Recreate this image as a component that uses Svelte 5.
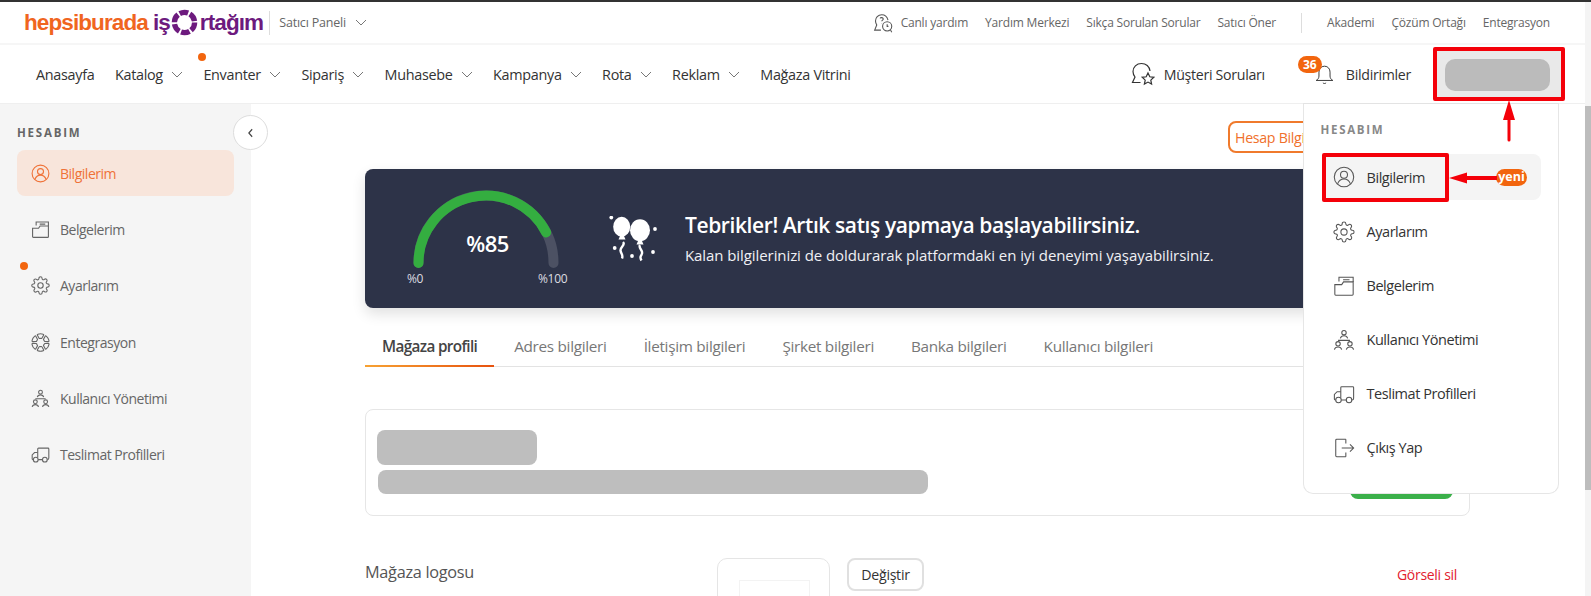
<script>
  const topLinks = ['Yardım Merkezi', 'Sıkça Sorulan Sorular', 'Satıcı Öner'];
  const topLinks2 = ['Akademi', 'Çözüm Ortağı', 'Entegrasyon'];
  const nav = [
    { t: 'Anasayfa' }, { t: 'Katalog', c: 1 }, { t: 'Envanter', c: 1, dot: 1 }, { t: 'Sipariş', c: 1 },
    { t: 'Muhasebe', c: 1 }, { t: 'Kampanya', c: 1 }, { t: 'Rota', c: 1 }, { t: 'Reklam', c: 1 }, { t: 'Mağaza Vitrini' }
  ];
  const side = [
    { t: 'Belgelerim', i: 'docs' }, { t: 'Ayarlarım', i: 'gear', dot: 1 }, { t: 'Entegrasyon', i: 'integ' },
    { t: 'Kullanıcı Yönetimi', i: 'users' }, { t: 'Teslimat Profilleri', i: 'truck' }
  ];
  const menu = [
    { t: 'Ayarlarım', i: 'gear' }, { t: 'Belgelerim', i: 'docs' }, { t: 'Kullanıcı Yönetimi', i: 'users' },
    { t: 'Teslimat Profilleri', i: 'truck' }, { t: 'Çıkış Yap', i: 'exit' }
  ];
  const tabs = ['Adres bilgileri', 'İletişim bilgileri', 'Şirket bilgileri', 'Banka bilgileri', 'Kullanıcı bilgileri'];
  const petals = [0, 60, 120, 180, 240, 300];
</script>

{#snippet chev()}
  <svg class="chev" viewBox="0 0 12 7"><path d="M1 1l5 5 5-5" /></svg>
{/snippet}

{#snippet icon(name)}
  <svg class="ico" viewBox="0 0 24 24">
    {#if name === 'user'}
      <circle cx="12" cy="12" r="10.6" /><circle cx="12" cy="9.6" r="3.8" /><path d="M5 19.5c1.2-3.5 3.8-5.4 7-5.4s5.8 1.9 7 5.4" />
    {:else if name === 'docs'}
      <path d="M2 10.500h7.500l2-3H22V21a1 1 0 0 1-1 1H3a1 1 0 0 1-1-1z" /><path d="M6.500 7V2.500H22V7.500M11 5.200h7" />
    {:else if name === 'gear'}
      <circle cx="12" cy="12" r="3.4" /><path d="M19.4 15a1.65 1.65 0 0 0 .33 1.82l.06.06a2 2 0 0 1 0 2.83 2 2 0 0 1-2.83 0l-.06-.06a1.65 1.65 0 0 0-1.82-.33 1.65 1.65 0 0 0-1 1.51V21a2 2 0 0 1-2 2 2 2 0 0 1-2-2v-.09A1.65 1.65 0 0 0 9 19.4a1.65 1.65 0 0 0-1.82.33l-.06.06a2 2 0 0 1-2.83 0 2 2 0 0 1 0-2.83l.06-.06a1.65 1.65 0 0 0 .33-1.82 1.65 1.65 0 0 0-1.51-1H3a2 2 0 0 1-2-2 2 2 0 0 1 2-2h.09A1.65 1.65 0 0 0 4.6 9a1.65 1.65 0 0 0-.33-1.82l-.06-.06a2 2 0 0 1 0-2.83 2 2 0 0 1 2.83 0l.06.06a1.65 1.65 0 0 0 1.82.33H9a1.65 1.65 0 0 0 1-1.51V3a2 2 0 0 1 2-2 2 2 0 0 1 2 2v.09a1.65 1.65 0 0 0 1 1.51 1.65 1.65 0 0 0 1.82-.33l.06-.06a2 2 0 0 1 2.83 0 2 2 0 0 1 0 2.83l-.06.06a1.65 1.65 0 0 0-.33 1.82V9a1.65 1.65 0 0 0 1.51 1H21a2 2 0 0 1 2 2 2 2 0 0 1-2 2h-.09a1.65 1.65 0 0 0-1.51 1z" />
    {:else if name === 'integ'}
      {#each petals as a}
        <path transform="rotate({a} 12 12)" d="M8.600 1.600c2.200-.8 4.600-.8 6.800 0 .6.2.8.8.5 1.300l-2.200 3.600c-.2.4-.6.5-1 .4-.5-.1-1-.1-1.500 0-.4.1-.8 0-1-.4L8.100 2.900c-.3-.5-.1-1.100.5-1.300z" />
      {/each}
    {:else if name === 'users'}
      <circle cx="12" cy="4" r="2.400" /><path d="M8 10.200c.5-2 2-2.800 4-2.800s3.500.8 4 2.800M5.500 12.400h13" />
      <circle cx="5.500" cy="16.200" r="2.400" /><path d="M1.500 22.500c.5-2 2-2.800 4-2.800s3.500.8 4 2.800" />
      <circle cx="18.500" cy="16.200" r="2.400" /><path d="M14.500 22.500c.5-2 2-2.800 4-2.800s3.500.8 4 2.800" />
    {:else if name === 'truck'}
      <path d="M8.500 16V5a1 1 0 0 1 1-1h12a1 1 0 0 1 1 1v11.500c0 1-.5 2-1.800 2" />
      <path d="M3 18.500H2.500a1 1 0 0 1-1-1v-5l3-3h4M9 18.500h5.500" />
      <circle cx="6" cy="18.500" r="3" /><circle cx="17.500" cy="18.500" r="3" />
    {:else if name === 'exit'}
      <path d="M14 2.500H4a1 1 0 0 0-1 1v17a1 1 0 0 0 1 1h10M9.500 12h13M18.500 8l4 4-4 4M14 21.500V17M14 2.500V7" />
    {/if}
  </svg>
{/snippet}

<div class="page">
  <div class="viewport">
    <header class="topbar">
      <div class="logo">
        <span class="hb">hepsiburada</span>
        <span class="io">iş<svg class="ring" viewBox="0 0 28 28"><circle cx="14" cy="14" r="10.5" /></svg>rtağım</span>
      </div>
      <div class="panel">Satıcı Paneli {@render chev()}</div>
      <div class="toplinks">
        <span class="live">
          <svg class="liveico" viewBox="0 0 24 24">
            <path d="M18 8.500C17 4.500 14 2 10.500 2 6 2 3 5.500 3 9.500c0 2 .8 3.500 1.500 4.800L2 20.500h7.500" />
            <path d="M8.500 6.500c.5-1.300 3.500-1.300 3.800.5.2 1.500-1.800 1.500-1.800 3M10.500 12.500v.5" />
            <circle cx="17" cy="16" r="5.500" /><path d="M21 20.500l1.500 2.500M17 13.500V16h1.500" />
          </svg>
          Canlı yardım
        </span>
        {#each topLinks as l}<span>{l}</span>{/each}
        <i class="vline"></i>
        {#each topLinks2 as l}<span>{l}</span>{/each}
      </div>
    </header>

    <nav class="navbar">
      <ul class="navlist">
        {#each nav as n}
          <li class:hasdot={n.dot}>{n.t}{#if n.c}{@render chev()}{/if}</li>
        {/each}
      </ul>
      <div class="navright">
        <span class="nr q">
          <svg class="qico" viewBox="0 0 24 24">
            <path d="M19 9C18.500 4.500 15 1.500 10.500 1.500 5.500 1.500 2 5 2 9.500c0 2.200.8 4 2 5.500L1.500 20.500h8" />
            <path d="M17 11l1.800 3.800 4 .5-3 2.800.8 4-3.600-2-3.600 2 .8-4-3-2.800 4-.5z" />
          </svg>
          Müşteri Soruları
        </span>
        <span class="nr bell">
          <em class="badge">36</em>
          <svg class="bellico" viewBox="0 0 24 24"><path d="M12 1.500c-4.500 0-7 3.500-7 7.500v5c0 2.500-1.500 4.500-3.500 5.500h21c-2-1-3.500-3-3.500-5.500V9c0-4-2.500-7.500-7-7.500zM10 22.500c1 1.200 3 1.200 4 0" /></svg>
          Bildirimler
        </span>
      </div>
    </nav>

    <div class="body">
      <aside class="sidebar">
        <h4>HESABIM</h4>
        <div class="sideactive">{@render icon('user')}Bilgilerim</div>
        {#each side as s}
          <div class="siderow" class:hasdot={s.dot}>{@render icon(s.i)}{s.t}</div>
        {/each}
      </aside>

      <main class="main">
        <div class="actions"><button class="hesap">Hesap Bilgilerim</button></div>
        <section class="banner">
          <div class="gauge">
            <svg viewBox="0 0 170 100" class="gaugesvg">
              <path class="track" d="M14.500 77A67.500 67.500 0 0 1 149.500 77" />
              <path class="fill" d="M14.500 77A67.500 67.500 0 0 1 142.100 46.400" />
            </svg>
            <b>%85</b>
            <span class="g0">%0</span>
            <span class="g100">%100</span>
          </div>
          <svg class="balloons" viewBox="0 0 50 48">
            <g fill="#fff">
              <ellipse cx="12.700" cy="10.700" rx="8.500" ry="10" /><ellipse cx="31" cy="14.300" rx="10" ry="11" />
              <path d="M11 20h4l1.500 3.500h-7zM29 25h4l1.500 3.500h-7z" />
              <circle cx="2.300" cy="1.600" r="1.900" /><circle cx="46" cy="13" r="1.900" /><circle cx="5.700" cy="32" r="1.900" />
              <circle cx="23" cy="40" r="1.900" /><circle cx="44" cy="36" r="1.900" />
            </g>
            <path class="str" d="M14 26c3 3-3 5-2.500 8.500s3 5 1.500 8M31 29c-2 3 3 5 2 8.500s-3 3-.5 7" />
          </svg>
          <div class="bantext">
            <h2>Tebrikler! Artık satış yapmaya başlayabilirsiniz.</h2>
            <p>Kalan bilgilerinizi de doldurarak platformdaki en iyi deneyimi yaşayabilirsiniz.</p>
          </div>
        </section>

        <div class="tabs">
          <span class="tab active">Mağaza profili</span>
          {#each tabs as t}<span class="tab">{t}</span>{/each}
        </div>

        <section class="card">
          <div class="cardtext">
            <div class="blk b1"></div>
            <div class="blk b2"></div>
          </div>
          <div class="greenbtn"></div>
        </section>

        <section class="logorow">
          <div class="logoinfo">
            <h3>Mağaza logosu</h3>
            <p>Satıcı profilinde kullanılacak mağaza görseli ürünlerde</p>
          </div>
          <div class="logobox"><i></i></div>
          <button class="change">Değiştir</button>
          <span class="del">Görseli sil</span>
        </section>

        <button class="collapse" aria-label="Daralt"><svg viewBox="0 0 8 12"><path d="M6 1.500L2 6l4 4.500" /></svg></button>
      </main>
    </div>

    <div class="userbtn"><div class="userpill"></div></div>

    <div class="dropdown">
      <h4>HESABIM</h4>
      <div class="mrow sel">{@render icon('user')}Bilgilerim<em class="yeni">yeni</em></div>
      {#each menu as m}
        <div class="mrow">{@render icon(m.i)}{m.t}</div>
      {/each}
    </div>

    <i class="redbox rb1"></i>
    <i class="redbox rb2"></i>
    <svg class="arrow a1" viewBox="0 0 14 42"><path d="M7 0L13 20H8.500V40a1.500 1.500 0 0 1-3 0V20H1z" /></svg>
    <svg class="arrow a2" viewBox="0 0 48 12"><path d="M0 6L18 .5V4H48V8H18V11.500z" /></svg>
  </div>
  <div class="scrollbar"><div class="thumb"></div></div>
</div>

<style>
  :global(body) { margin: 0; background: #fff; }
  .page { display: flex; width: 1591px; height: 596px; overflow: hidden; border-top: 2px solid #333; box-sizing: border-box; font-family: "Open Sans", "Noto Sans", sans-serif; color: #333; }
  .viewport { position: relative; flex: 1; min-width: 0; }
  .scrollbar { width: 6px; background: #f4f4f4; padding-top: 104px; padding-bottom: 106px; box-sizing: border-box; display: flex; }
  .thumb { flex: 1; background: #bdbdbd; }

  .topbar { height: 41px; border-bottom: 2px solid #f6f6f6; display: flex; align-items: center; padding-left: 24px; }
  .logo { display: flex; align-items: center; font-family: "Liberation Sans", sans-serif; font-weight: 700; font-size: 22.5px; letter-spacing: -.9px; gap: 5px; border-right: 1px solid #ddd; padding-right: 6px; height: 24px; line-height: 24px; }
  .hb { color: #f0651f; }
  .io { color: #6d1a7e; display: flex; align-items: center; }
  .ring { width: 27px; height: 27px; margin: 0 1.5px; fill: none; stroke: #6d1a7e; stroke-width: 5.5; stroke-dasharray: 9 2; }
  .panel { margin-left: 9px; font-size: 12.5px; color: #666; display: flex; align-items: center; letter-spacing: -.2px; }
  .panel .chev { margin-left: 9px; }
  .toplinks { margin-left: auto; margin-right: 35px; display: flex; align-items: center; gap: 17px; font-size: 12px; color: #666; letter-spacing: -.2px; }
  .live { display: flex; align-items: center; gap: 8px; }
  .liveico { width: 20px; height: 20px; fill: none; stroke: #555; stroke-width: 1.300; }
  .vline { width: 1px; height: 20px; background: #ddd; margin: 0 8px; }

  .chev { width: 12px; height: 7px; fill: none; stroke: #777; stroke-width: 1; margin-left: 8px; flex: none; }

  .navbar { height: 59px; border-bottom: 1px solid #efefef; display: flex; align-items: center; padding-left: 36px; box-sizing: border-box; }
  .navlist { list-style: none; margin: 0; padding: 0; display: flex; gap: 20.5px; font-size: 14.4px; letter-spacing: -.3px; color: #333; }
  .navlist li { display: flex; align-items: center; position: relative; }
  .navlist li.hasdot::before { content: ""; position: absolute; left: -5px; top: -12px; width: 8px; height: 8px; border-radius: 50%; background: #f2650e; }
  .navright { margin-left: auto; margin-right: 174px; display: flex; align-items: center; gap: 32px; font-size: 14.2px; letter-spacing: -.3px; }
  .nr { display: flex; align-items: center; position: relative; }
  .qico { width: 24px; height: 24px; fill: none; stroke: #333; stroke-width: 1.200; margin-right: 9px; }
  .bellico { width: 19px; height: 19px; fill: none; stroke: #333; stroke-width: 1.200; margin-right: 12px; margin-left: 18px; }
  .badge { position: absolute; left: 1px; top: -9px; width: 24px; height: 17px; border-radius: 9px; background: #f2650e; color: #fff; font-style: normal; font-size: 12px; font-weight: 700; text-align: center; line-height: 17px; letter-spacing: 0; }

  .body { display: grid; grid-template-columns: 251px 1fr; height: 493px; }
  .sidebar { background: #f5f5f5; padding: 21px 17px 0; box-sizing: border-box; }
  .sidebar h4 { margin: 0 0 9px; font-size: 11.500px; line-height: 16px; font-weight: 700; letter-spacing: 1.800px; color: #666; }
  .sideactive, .siderow { height: 46px; display: flex; align-items: center; padding-left: 13.5px; font-size: 14px; letter-spacing: -.48px; position: relative; }
  .sideactive { width: 217px; box-sizing: border-box; background: #f8e5db; border-radius: 8px; color: #ef7238; margin-bottom: 10.500px; }
  .siderow { color: #666; margin-bottom: 10.300px; }
  .siderow.hasdot::before { content: ""; position: absolute; left: 3px; top: -1px; width: 8px; height: 8px; border-radius: 50%; background: #f2650e; }
  .ico { width: 19px; height: 19px; fill: none; stroke: currentColor; stroke-width: 1.400; margin-right: 10.5px; flex: none; }

  .main { position: relative; padding: 17px 115px 0 114px; min-width: 0; }
  .actions { display: flex; height: 32px; margin-bottom: 16px; }
  .hesap { margin-left: 863px; width: 150px; height: 32px; box-sizing: border-box; background: #fff; border: 2px solid #f07a2c; border-radius: 8px; color: #f0702b; font: inherit; font-size: 14.2px; letter-spacing: -.3px; text-align: left; padding: 0 0 0 5px; white-space: nowrap; }
  .banner { height: 139px; background: #2d3348; border-radius: 8px; box-shadow: 0 6px 14px rgba(0,0,0,.12); display: flex; color: #fff; box-sizing: border-box; padding-left: 39px; align-items: flex-start; margin-bottom: 19px; }
  .gauge { position: relative; width: 170px; height: 139px; flex: none; margin-right: 35px; }
  .gaugesvg { position: absolute; left: 0; top: 17px; width: 170px; height: 100px; fill: none; stroke-linecap: round; stroke-width: 10; }
  .track { stroke: #4c5163; }
  .fill { stroke: #34ae40; }
  .gauge b { position: absolute; left: 0; right: 0; top: 60px; text-align: center; font-size: 22px; line-height: 28px; font-weight: 600; letter-spacing: -.5px; margin-left: -3px; }
  .g0, .g100 { position: absolute; top: 102px; font-size: 12px; line-height: 16px; color: #dcdce0; letter-spacing: -.3px; }
  .g0 { left: 3px; }
  .g100 { left: 134px; }
  .balloons { width: 50px; height: 48px; margin-top: 47px; flex: none; }
  .str { fill: none; stroke: #fff; stroke-width: 2.400; }
  .bantext { margin-left: 26px; margin-top: 41px; }
  .bantext h2 { margin: 0; font-size: 21px; line-height: 31px; font-weight: 600; letter-spacing: -.4px; white-space: nowrap; }
  .bantext p { margin: 3px 0 0; font-size: 15px; line-height: 22px; letter-spacing: -.08px; white-space: nowrap; color: #f0f0f4; }

  .tabs { display: flex; height: 39px; border-bottom: 1px solid #e3e3e3; gap: 37px; font-size: 15.300px; letter-spacing: -.3px; color: #777; box-sizing: content-box; padding-left: 17px; margin-bottom: 42px; }
  .tab { line-height: 38px; position: relative; white-space: nowrap; }
  .tab.active { color: #444; font-weight: 600; letter-spacing: -.65px; }
  .tab.active::after { content: ""; position: absolute; left: -17px; right: -17px; bottom: -1px; height: 2px; background: linear-gradient(90deg, #f7a233, #e7520e); }

  .card { height: 107px; box-sizing: border-box; border: 1px solid #e6e6e6; border-radius: 8px; position: relative; padding: 20px 11px 0; }
  .blk { background: #bebebe; border-radius: 6px; }
  .b1 { width: 160px; height: 35px; border-radius: 8px; }
  .b2 { width: 550px; height: 24px; margin-top: 5px; margin-left: 1px; border-radius: 8px; }
  .greenbtn { position: absolute; left: 984px; top: 60px; width: 103px; height: 29px; background: #3bb04a; border-radius: 8px; }

  .logorow { display: flex; align-items: flex-start; margin-top: 42px; position: relative; }
  .logoinfo { width: 352px; flex: none; padding-top: 3px; }
  .logoinfo h3 { margin: 0; font-size: 16.300px; line-height: 22px; font-weight: 400; color: #555; letter-spacing: -.3px; }
  .logoinfo p { margin: 10px 0 0; font-size: 12.500px; line-height: 18px; color: #888; white-space: nowrap; }
  .logobox { width: 113px; height: 90px; box-sizing: border-box; border: 1px solid #e5e5e5; border-radius: 10px; flex: none; padding: 21px 21px 0; }
  .logobox i { display: block; width: 69px; height: 50px; border: 1px solid #f3f3f3; }
  .change { margin-left: 17px; width: 77px; height: 33px; background: #fff; border: 2px solid #e0e0e0; border-radius: 8px; font: inherit; font-size: 14.2px; letter-spacing: -.3px; color: #333; padding: 0; }
  .del { margin-left: auto; margin-right: 13px; margin-top: 7px; color: #e2202e; font-size: 14px; letter-spacing: -.3px; line-height: 20px; }

  .collapse { position: absolute; left: -18px; top: 11px; width: 35px; height: 35px; border-radius: 50%; background: #fff; border: 1px solid #ddd; padding: 0; display: flex; align-items: center; justify-content: center; }
  .collapse svg { width: 7px; height: 10px; fill: none; stroke: #444; stroke-width: 1.400; }

  .userbtn { position: absolute; left: 1433px; top: 45px; width: 130px; height: 53px; box-sizing: border-box; background: #e9e9e9; padding: 12px; border-radius: 8px; }
  .userpill { background: #bbb; height: 32px; width: 105px; border-radius: 10px; }

  .dropdown { position: absolute; left: 1303px; top: 101px; width: 256px; height: 391px; box-sizing: border-box; background: #fff; border: 1px solid #e6e6e6; border-top-color: #e3e3e3; border-radius: 0 0 10px 10px; padding: 17px 17px 0 18px; }
  .dropdown h4 { margin: 0 0 15px -1.5px; font-size: 11.500px; line-height: 18px; font-weight: 700; letter-spacing: 1.700px; color: #888; }
  .mrow { height: 46px; width: 219px; box-sizing: border-box; display: flex; align-items: center; padding-left: 10.5px; font-size: 14.500px; letter-spacing: -.45px; color: #333; margin-bottom: 8px; font-weight: 500; }
  .mrow .ico { width: 22px; height: 22px; margin-right: 12px; color: #555; stroke-width: 1.150; }
  .mrow.sel { background: #f4f4f4; border-radius: 8px; position: relative; margin-bottom: 8.500px; }
  .yeni { position: absolute; left: 174px; top: 15px; width: 31px; height: 17px; background: #f2650e; color: #fff; border-radius: 9px; font-style: normal; font-weight: 700; font-size: 12.500px; line-height: 16px; text-align: center; letter-spacing: 0; }

  .redbox { position: absolute; display: block; box-sizing: border-box; border: 4px solid #f40009; border-radius: 2px; }
  .rb1 { left: 1433px; top: 45px; width: 132px; height: 54px; }
  .rb2 { left: 1322px; top: 151px; width: 127px; height: 49px; }
  .arrow { position: absolute; fill: #f40009; }
  .a1 { left: 1502px; top: 98px; width: 14px; height: 42px; }
  .a2 { left: 1449px; top: 170px; width: 48px; height: 12px; }
</style>
